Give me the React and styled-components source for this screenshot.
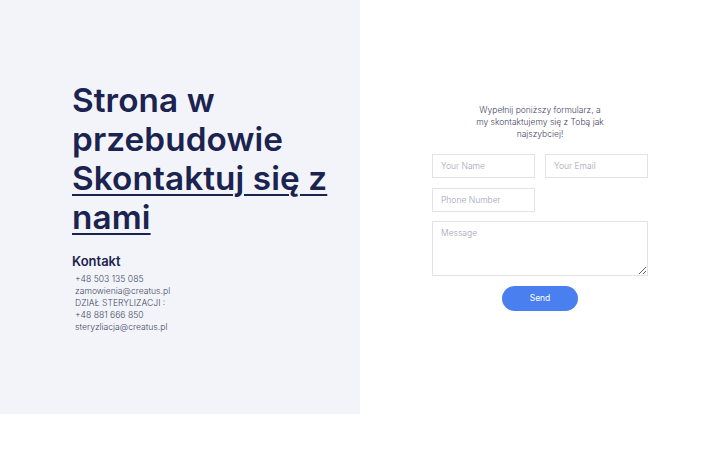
import styled, { createGlobalStyle } from "styled-components";

const Global = createGlobalStyle`
 html, body { margin: 0; padding: 0; background: #fff; }
 body { font-family: Inter, "DejaVu Sans", sans-serif; }
 * { box-sizing: border-box; }
`;

const Page = styled.div`
 display: grid;
 grid-template-columns: 360px 360px;
 height: 414px;
`;

const Left = styled.div`
 background: #f3f4f9;
 display: flex;
 flex-direction: column;
 justify-content: center;
 padding: 0 0 0 72px;
`;

const Title = styled.h1`
 margin: 0;
 font-size: 33.3px;
 line-height: 39px;
 font-weight: 600;
 color: #1b2350;
 letter-spacing: 0.1px;
`;

const TitleLink = styled.a`
 color: inherit;
 text-decoration: underline;
 text-decoration-thickness: 2px;
 text-underline-offset: 4px;
`;

const ContactHead = styled.h3`
 margin: 16px 0 4px;
 font-size: 13px;
 font-weight: 600;
 color: #1b2350;
`;

const ContactLine = styled.div`
 padding-left: 3px;
 font-size: 8.6px;
 line-height: 12px;
 color: #444a66;
 font-weight: 300;
`;

const Right = styled.div`
 display: flex;
 flex-direction: column;
 align-items: center;
 justify-content: center;
`;

const Intro = styled.p`
 margin: 0 0 14px;
 width: 150px;
 text-align: center;
 font-size: 8.5px;
 line-height: 12px;
 color: #3f4560;
 font-weight: 300;
`;

const Form = styled.form`
 width: 216px;
 display: grid;
 grid-template-columns: 103px 103px;
 column-gap: 10px;
 row-gap: 10px;
`;

const Field = styled.input`
 display: block;
 height: 24px;
 width: 103px;
 border: 1px solid #e2e3e8;
 padding: 0 8px;
 font-family: inherit;
 font-size: 8.5px;
 font-weight: 300;
 color: #333;
 outline: none;
 &::placeholder { color: #a0a3b0; }
`;

const Message = styled.textarea`
 display: block;
 grid-column: 1 / span 2;
 height: 55px;
 margin-top: -1px;
 border: 1px solid #e2e3e8;
 padding: 6px 8px;
 font-family: inherit;
 font-size: 8.5px;
 font-weight: 300;
 resize: vertical;
 outline: none;
 &::placeholder { color: #a0a3b0; }
`;

const Send = styled.button`
 grid-column: 1 / span 2;
 justify-self: center;
 width: 76px;
 height: 25px;
 border: 0;
 border-radius: 13px;
 background: #4a7ff0;
 color: #fff;
 font-family: inherit;
 font-size: 8.5px;
 cursor: pointer;
`;

const contacts = [
 "+48 503 135 085",
 "zamowienia@creatus.pl",
 "DZIAŁ STERYLIZACJI :",
 "+48 881 666 850",
 "steryzliacja@creatus.pl",
];

export default function App() {
 return (
  <>
   <Global />
   <Page>
    <Left>
     <Title>
      Strona w przebudowie
      <br />
      <TitleLink href="#">Skontaktuj się z nami</TitleLink>
     </Title>
     <ContactHead>Kontakt</ContactHead>
     {contacts.map((c) => (
      <ContactLine key={c}>{c}</ContactLine>
     ))}
    </Left>
    <Right>
     <Intro>
      Wypełnij poniższy formularz, a<br />
      my skontaktujemy się z Tobą jak najszybciej!
     </Intro>
     <Form onSubmit={(e) => e.preventDefault()}>
      <Field placeholder="Your Name" />
      <Field placeholder="Your Email" />
      <Field placeholder="Phone Number" />
      <div />
      <Message placeholder="Message" />
      <Send type="submit">Send</Send>
     </Form>
    </Right>
   </Page>
  </>
 );
}
